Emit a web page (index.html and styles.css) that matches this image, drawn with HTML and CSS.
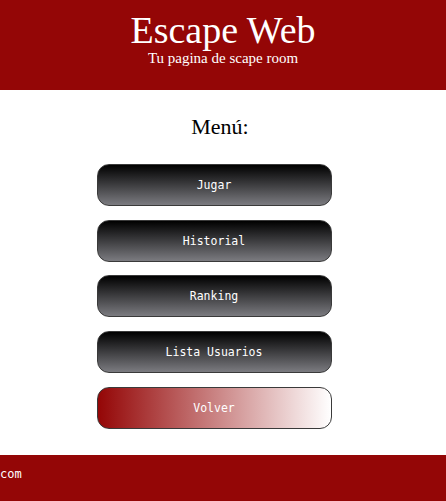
FILE: index.html
```html
<!DOCTYPE html>
<html lang="es">
<head>
    <meta charset="UTF-8">
    <meta name="viewport" content="width=device-width, initial-scale=1.0">
    <title>Escape Web</title>
    <link rel="stylesheet" href="styles.css">
</head>
<body>

    <header class="cabecera">
        <h1>Escape Web</h1>
        <p>Tu pagina de scape room</p>
    </header>

    <main class="menu">
        <h2>Menú:</h2>
        <button class="boton">Jugar</button>
        <button class="boton">Historial</button>
        <button class="boton">Ranking</button>
        <button class="boton">Lista Usuarios</button>
        <button class="boton volver">Volver</button>
    </main>

    <footer class="pie">com</footer>

</body>
</html>
```

FILE: styles.css
```css
body {
    margin: 0;
    font-family: "Liberation Serif", serif;
    background-color: white;
}
.cabecera {
    background-color: #940606;
    color: white;
    text-align: center;
    height: 90px;
    padding-top: 10px;
    box-sizing: border-box;
}
.cabecera h1 {
    margin: 0;
    font-weight: normal;
    font-size: 38px;
    line-height: 40px;
}
.cabecera p {
    margin: 0;
    font-size: 15px;
    line-height: 16px;
}
.menu {
    display: flex;
    flex-direction: column;
    align-items: center;
    gap: 13.75px;
    padding: 24px 0 26px;
}
.menu h2 {
    margin: 0 6px 10px 0;
    font-weight: normal;
    font-size: 22px;
    line-height: 26px;
}
.boton {
    width: 235px;
    height: 42px;
    margin-right: 18px;
    border: 1px solid #3a3a3a;
    border-radius: 12px;
    background: linear-gradient(to bottom, #000000, #7b7b80);
    color: white;
    font-family: "DejaVu Sans Mono", monospace;
    font-size: 11.5px;
    cursor: pointer;
}
.volver {
    background: linear-gradient(to right, #940606, #ffffff);
}
.pie {
    background-color: #940606;
    color: white;
    font-family: "DejaVu Sans Mono", monospace;
    font-size: 12px;
    height: 46px;
    padding-top: 12px;
    box-sizing: border-box;
}
```
